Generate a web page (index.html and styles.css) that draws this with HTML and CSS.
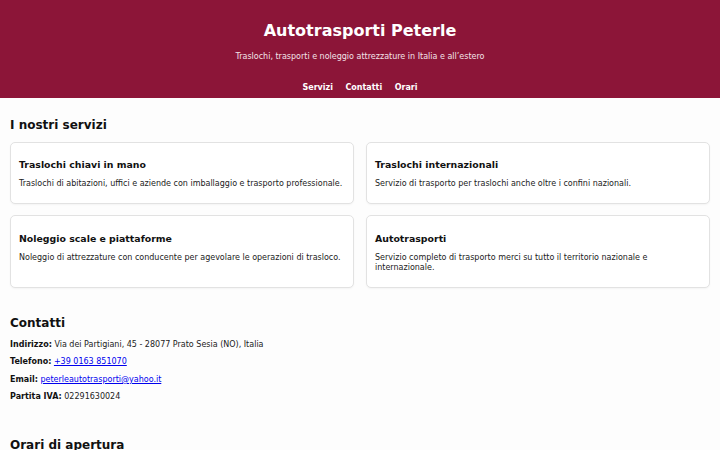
FILE: index.html
```html
<!DOCTYPE html>
<html lang="it">
<head>
    <meta charset="UTF-8">
    <meta name="viewport" content="width=device-width, initial-scale=1">
    <title>Autotrasporti Peterle</title>
    <link rel="stylesheet" href="styles.css">
</head>

<body>
    <header class="testata">
        <h1>Autotrasporti Peterle</h1>
        <p class="sottotitolo">Traslochi, trasporti e noleggio attrezzature in Italia e all’estero</p>
        <nav class="menu">
            <a href="#servizi">Servizi</a>
            <a href="#contatti">Contatti</a>
            <a href="#orari">Orari</a>
        </nav>
    </header>

    <main class="contenuto">
        <section id="servizi" class="sezione">
            <h2>I nostri servizi</h2>
            <div class="griglia">
                <div class="scheda">
                    <h3>Traslochi chiavi in mano</h3>
                    <p>Traslochi di abitazioni, uffici e aziende con imballaggio e trasporto professionale.</p>
                </div>
                <div class="scheda">
                    <h3>Traslochi internazionali</h3>
                    <p>Servizio di trasporto per traslochi anche oltre i confini nazionali.</p>
                </div>
                <div class="scheda">
                    <h3>Noleggio scale e piattaforme</h3>
                    <p>Noleggio di attrezzature con conducente per agevolare le operazioni di trasloco.</p>
                </div>
                <div class="scheda">
                    <h3>Autotrasporti</h3>
                    <p>Servizio completo di trasporto merci su tutto il territorio nazionale e internazionale.</p>
                </div>
            </div>
        </section>

        <section id="contatti" class="sezione">
            <h2>Contatti</h2>
            <p><strong>Indirizzo:</strong> Via dei Partigiani, 45 - 28077 Prato Sesia (NO), Italia</p>
            <p><strong>Telefono:</strong> <a href="tel:+390163851070">+39 0163 851070</a></p>
            <p><strong>Email:</strong> <a href="mailto:peterleautotrasporti@yahoo.it">peterleautotrasporti@yahoo.it</a></p>
            <p><strong>Partita IVA:</strong> 02291630024</p>
        </section>

        <section id="orari" class="sezione">
            <h2>Orari di apertura</h2>
            <p>Lunedì - Venerdì: 8:00 - 12:00, 14:00 - 18:00</p>
            <p>Sabato: su appuntamento</p>
        </section>
    </main>
</body>
</html>
```

FILE: styles.css
```css
body {
    margin: 0;
    font-family: "DejaVu Sans", sans-serif;
    font-size: 8px;
    line-height: 1.2;
    color: #222;
    background: #fdfdfd;
}

/* testata bordeaux */
.testata {
    background: #8c1538;
    color: #fff;
    text-align: center;
    padding: 21px 10px 1px;
}

.testata h1 {
    margin: 0;
    font-size: 16px;
    line-height: 19px;
}

.sottotitolo {
    margin: 12px 0 0;
    color: #f3e3e8;
}

.menu {
    display: flex;
    justify-content: center;
    gap: 12.5px;
    padding: 16px 0 0;
}

.menu a {
    color: #fff;
    font-weight: bold;
    text-decoration: none;
    padding: 5px 0;
}

.contenuto {
    padding: 10px;
}

.sezione {
    padding-bottom: 8px;
    margin-bottom: 20px;
}

h2 {
    font-size: 12px;
    margin: 10px 0 9px;
    color: #111;
}

.griglia {
    display: grid;
    grid-template-columns: 1fr 1fr;
    gap: 11px 12px;
}

.scheda {
    background: #fff;
    border: 1px solid #e2e2e2;
    border-radius: 5px;
    padding: 7px 8px 6px;
    box-shadow: 0 1px 2px rgba(0, 0, 0, 0.04);
}

.scheda h3 {
    font-size: 9.4px;
    margin: 9.5px 0 9px;
    color: #111;
}

.scheda p {
    margin: 9px 0 8px;
    line-height: 1.25;
}

p {
    margin: 8px 0;
}

strong {
    color: #111;
}
```
